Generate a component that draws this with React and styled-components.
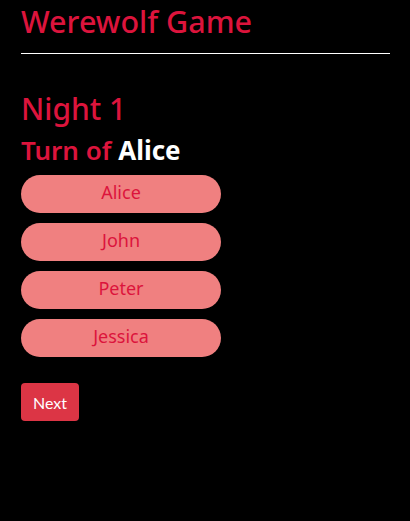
import React, { useState } from "react"
import styled, { createGlobalStyle } from "styled-components"

const GlobalStyle = createGlobalStyle`
    html, body {
        margin: 0;
        background: #000;
    }
    body {
        font-family: "Noto Sans", "Open Sans", sans-serif;
    }
`

const Page = styled.div`
    padding: 0 20px 0 21px;
    display: flex;
    flex-direction: column;
    align-items: flex-start;
`

const Title = styled.h1`
    margin: 0;
    padding-top: 1px;
    font-size: 30.5px;
    font-weight: 500;
    line-height: 40px;
    color: crimson;
`

const Rule = styled.hr`
    width: 100%;
    margin: 12px 0 0;
    border: none;
    border-top: 1px solid #fff;
`

const Night = styled.h2`
    margin: 34px 0 0;
    font-size: 30px;
    font-weight: 500;
    line-height: 42px;
    color: crimson;
`

const Turn = styled.h3`
    margin: 4px 0 9px;
    font-size: 26px;
    font-weight: 600;
    line-height: 32px;
    color: crimson;
`

const Name = styled.span`
    color: #fff;
    font-weight: 700;
`

const PlayerList = styled.div`
    display: flex;
    flex-direction: column;
    gap: 10px;
`

const Player = styled.button`
    width: 200px;
    height: 38px;
    padding: 0 0 4px;
    border: none;
    border-radius: 19px;
    background: ${(p) => (p.$picked ? "#e86b6b" : "lightcoral")};
    color: crimson;
    font-family: "Noto Sans", "Open Sans", sans-serif;
    font-size: 18px;
    cursor: pointer;
`

const NextButton = styled.button`
    margin-top: 26px;
    height: 38px;
    padding: 0 12px;
    border: none;
    border-radius: 4px;
    background: #dc3545;
    color: #fff;
    font-family: Lato, sans-serif;
    font-size: 16px;
    cursor: pointer;
`

const players = ["Alice", "John", "Peter", "Jessica"]

export default function App() {
    const [picked, setPicked] = useState(null)

    return (
        <>
            <GlobalStyle />
            <Page>
                <Title>Werewolf Game</Title>
                <Rule />
                <Night>Night 1</Night>
                <Turn>
                    Turn of <Name>Alice</Name>
                </Turn>
                <PlayerList>
                    {players.map((p) => (
                        <Player key={p} $picked={picked === p} onClick={() => setPicked(p)}>
                            {p}
                        </Player>
                    ))}
                </PlayerList>
                <NextButton>Next</NextButton>
            </Page>
        </>
    )
}
